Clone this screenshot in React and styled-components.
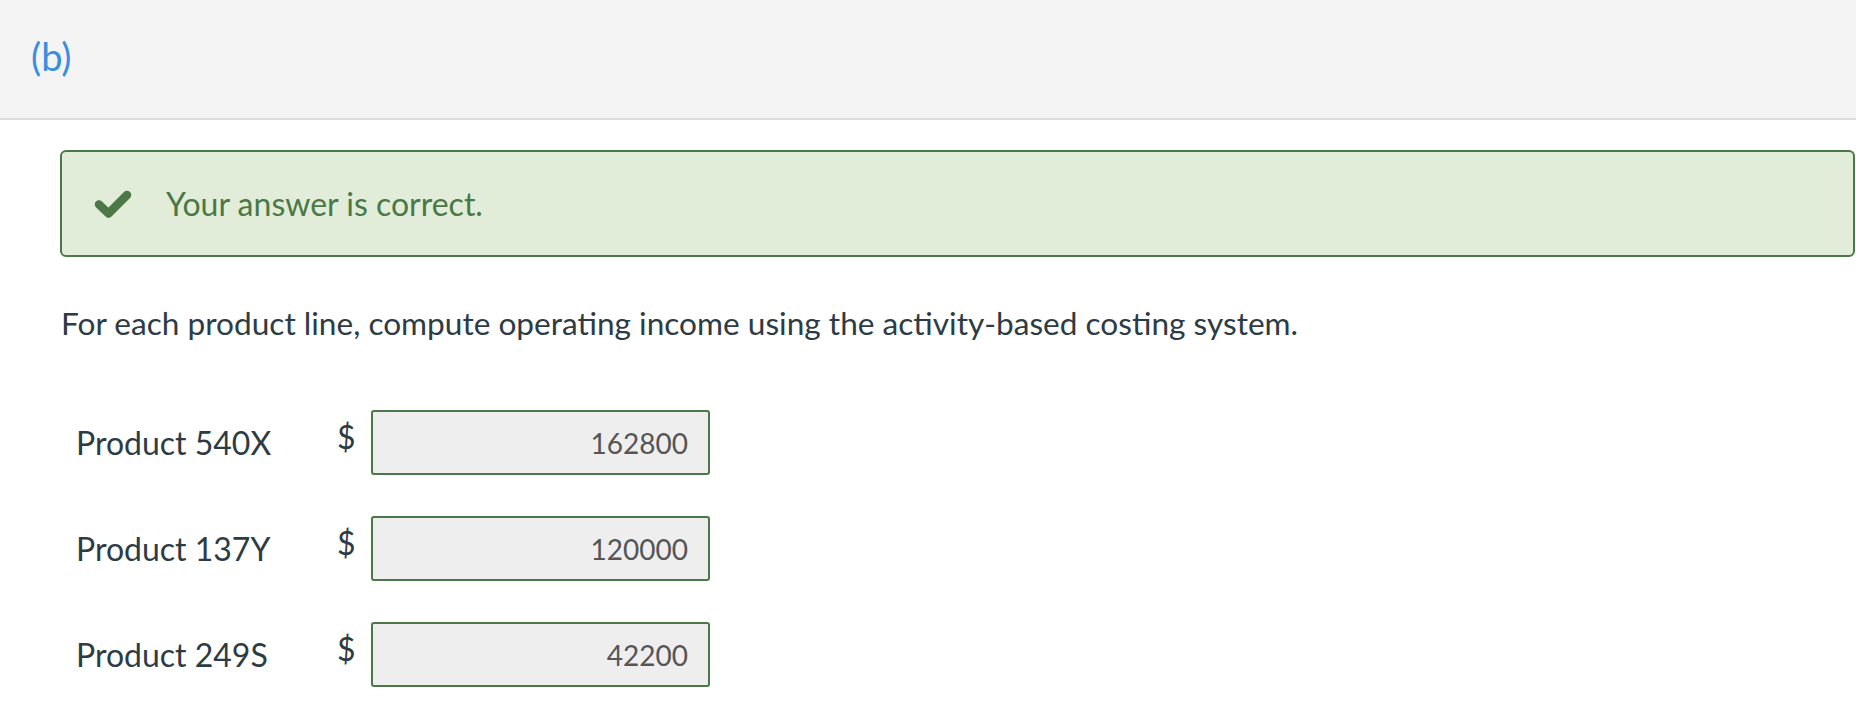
import React from 'react'
import styled, { createGlobalStyle } from 'styled-components'

const GlobalStyle = createGlobalStyle`
  body {
    margin: 0;
    background: #ffffff;
    font-family: Lato, "Open Sans", sans-serif;
  }
`

const Header = styled.div`
  height: 118px;
  background-color: #f4f4f4;
  border-bottom: 2px solid #dcdcdc;
  display: flex;
  align-items: center;
  padding-left: 31px;
`
const PartLabel = styled.span`
  font-size: 38px;
  color: #3a8ee0;
  line-height: 1;
  margin-top: -6px;
`
const Content = styled.div`
  padding-left: 60px;
  padding-right: 1px;
`
const Alert = styled.div`
  margin-top: 30px;
  height: 107px;
  box-sizing: border-box;
  border: 2px solid #4b7846;
  border-radius: 6px;
  background-color: #e1edd9;
  display: flex;
  align-items: center;
  padding-left: 32px;
  color: #4b7846;
`
const CheckIcon = styled.svg`
  width: 38px;
  height: 28px;
  flex-shrink: 0;
`
const AlertText = styled.span`
  font-size: 32px;
  margin-left: 34px;
`
const Question = styled.p`
  margin: 47px 0 0 1px;
  font-size: 31.6px;
  line-height: 38px;
  color: #2d3b45;
`
const Rows = styled.div`
  margin-top: 68px;
  padding-left: 16px;
  display: flex;
  flex-direction: column;
  gap: 41px;
`
const Row = styled.div`
  display: flex;
  align-items: center;
`
const Label = styled.span`
  width: 261px;
  font-size: 32px;
  color: #2d3b45;
`
const Dollar = styled.span`
  width: 34px;
  font-size: 32px;
  color: #2d3b45;
  margin-top: -12px;
`
const Field = styled.div`
  width: 339px;
  height: 65px;
  box-sizing: border-box;
  border: 2px solid #4b7846;
  border-radius: 3px;
  background-color: #eeeeee;
  display: flex;
  align-items: center;
  justify-content: flex-end;
  padding-right: 20px;
  font-size: 28px;
  color: #555555;
`

const answers = [
  { label: 'Product 540X', value: '162800' },
  { label: 'Product 137Y', value: '120000' },
  { label: 'Product 249S', value: '42200' },
]

const App = () => {
  return (
    <>
      <GlobalStyle />
      <Header>
        <PartLabel>(b)</PartLabel>
      </Header>
      <Content>
        <Alert>
          <CheckIcon viewBox="0 0 38 28">
            <polyline
              points="5,14.5 14.5,23.5 33,5"
              fill="none"
              stroke="currentColor"
              strokeWidth="8.5"
              strokeLinecap="round"
              strokeLinejoin="round"
            />
          </CheckIcon>
          <AlertText>Your answer is correct.</AlertText>
        </Alert>
        <Question>
          For each product line, compute operating income using the activity-based costing system.
        </Question>
        <Rows>
          {answers.map(a => (
            <Row key={a.label}>
              <Label>{a.label}</Label>
              <Dollar>$</Dollar>
              <Field>{a.value}</Field>
            </Row>
          ))}
        </Rows>
      </Content>
    </>
  )
}

export default App
